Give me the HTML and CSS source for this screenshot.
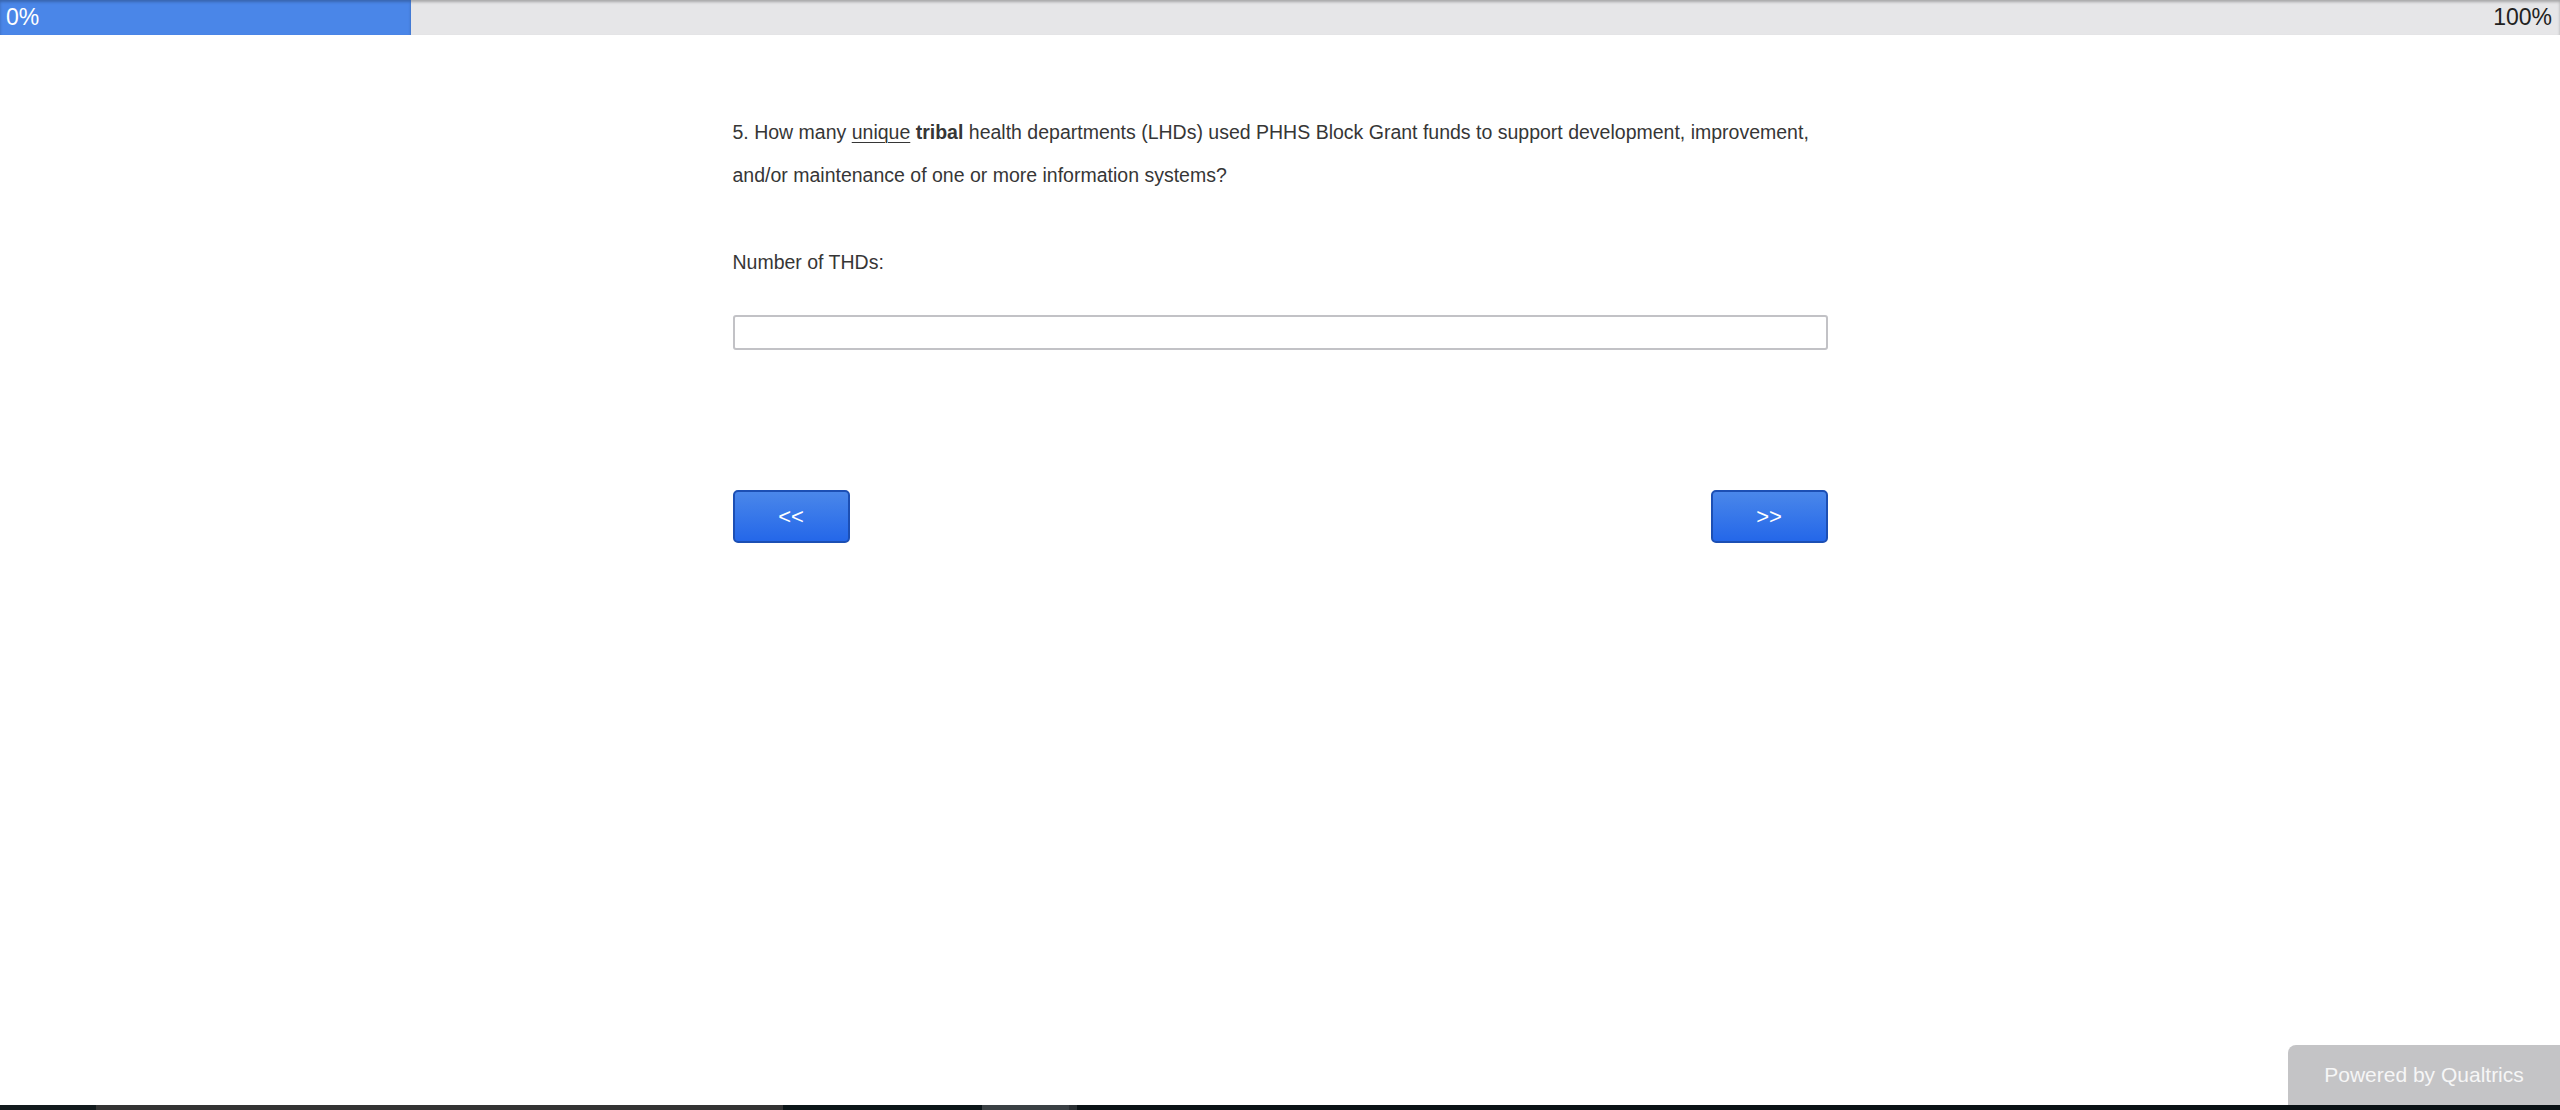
FILE: index.html
```html
<!DOCTYPE html>
<html lang="en">
<head>
    <meta charset="UTF-8">
    <title>Survey</title>
    <link rel="stylesheet" href="styles.css">
</head>
<body>
<div class="progress">
    <div class="progress-fill" style="width: 411px;"></div>
    <span class="progress-start">0%</span>
    <span class="progress-end">100%</span>
</div>

<div class="page">
    <div class="question">
        <p class="question-text">5. How many <u>unique</u> <b>tribal</b> health departments (LHDs) used PHHS Block Grant funds to support development, improvement, and/or maintenance of one or more information systems?</p>
        <label class="answer-label" for="thd">Number of THDs:</label>
        <input class="answer-input" id="thd" type="text">
    </div>

    <div class="nav">
        <button class="nav-btn" type="button">&lt;&lt;</button>
        <button class="nav-btn" type="button">&gt;&gt;</button>
    </div>
</div>

<div class="footer">
    <div class="powered">Powered by Qualtrics</div>
</div>
<div class="taskbar">
    <span class="seg seg-a"></span>
    <span class="seg seg-b"></span>
    <span class="seg seg-c"></span>
    <span class="seg seg-d"></span>
    <span class="seg seg-e"></span>
    <span class="seg seg-f"></span>
</div>
</body>
</html>
```

FILE: styles.css
```css
html, body {
    height: 100%;
}

body {
    margin: 0;
    padding: 0;
    display: flex;
    flex-direction: column;
    font-family: "Liberation Sans", Arial, sans-serif;
    background: #fff;
    color: #363636;
}

.progress {
    position: relative;
    height: 35px;
    background: #e6e6e8;
    box-shadow: inset 0 2px 3px rgba(0, 0, 0, 0.28);
    font-size: 23px;
    flex-shrink: 0;
}

.progress-fill {
    height: 100%;
    background: #4a86e8;
    box-shadow: inset 0 2px 3px rgba(0, 0, 0, 0.25);
}

.progress-start {
    position: absolute;
    left: 6px;
    top: 4px;
    color: #fff;
}

.progress-end {
    position: absolute;
    right: 8px;
    top: 4px;
    color: #222;
}

.page {
    flex: 1;
    width: 1095px;
    margin: 0 auto;
    padding-top: 76px;
}

.question-text {
    margin: 0 -12px 0 0;
    font-size: 19.5px;
    line-height: 43px;
}

.question-text u {
    text-decoration-thickness: 1px;
    text-underline-offset: 3px;
}

.answer-label {
    display: block;
    margin-top: 44px;
    font-size: 19.5px;
    line-height: 43px;
}

.answer-input {
    display: block;
    box-sizing: border-box;
    width: 100%;
    height: 35px;
    margin-top: 31px;
    border: 2px solid #c2c2c6;
    border-radius: 3px;
    background: #fff;
}

.nav {
    display: flex;
    justify-content: space-between;
    margin-top: 140px;
}

.nav-btn {
    width: 117px;
    height: 53px;
    border: 2px solid #1c4fb4;
    border-radius: 5px;
    background: linear-gradient(#4a87ea, #2467e9);
    color: #fff;
    font-family: "Liberation Sans", Arial, sans-serif;
    font-size: 22px;
}

.footer {
    display: flex;
    justify-content: flex-end;
    flex-shrink: 0;
}

.powered {
    width: 272px;
    height: 60px;
    box-sizing: border-box;
    padding-top: 18px;
    text-align: center;
    background: #c4c4c6;
    border-top-left-radius: 8px;
    color: #f6f6f6;
    font-size: 21px;
}

.taskbar {
    display: flex;
    height: 5px;
    flex-shrink: 0;
    background: #0b1518;
}

.seg {
    display: block;
}

.seg-a { width: 96px; background: #121a1d; }
.seg-b { width: 687px; background: #333333; }
.seg-c { width: 199px; background: #0b1518; }
.seg-d { width: 87px; background: #3a4044; }
.seg-e { width: 8px; background: #2a2f33; }
.seg-f { flex: 1; background: #0a1215; }
```
